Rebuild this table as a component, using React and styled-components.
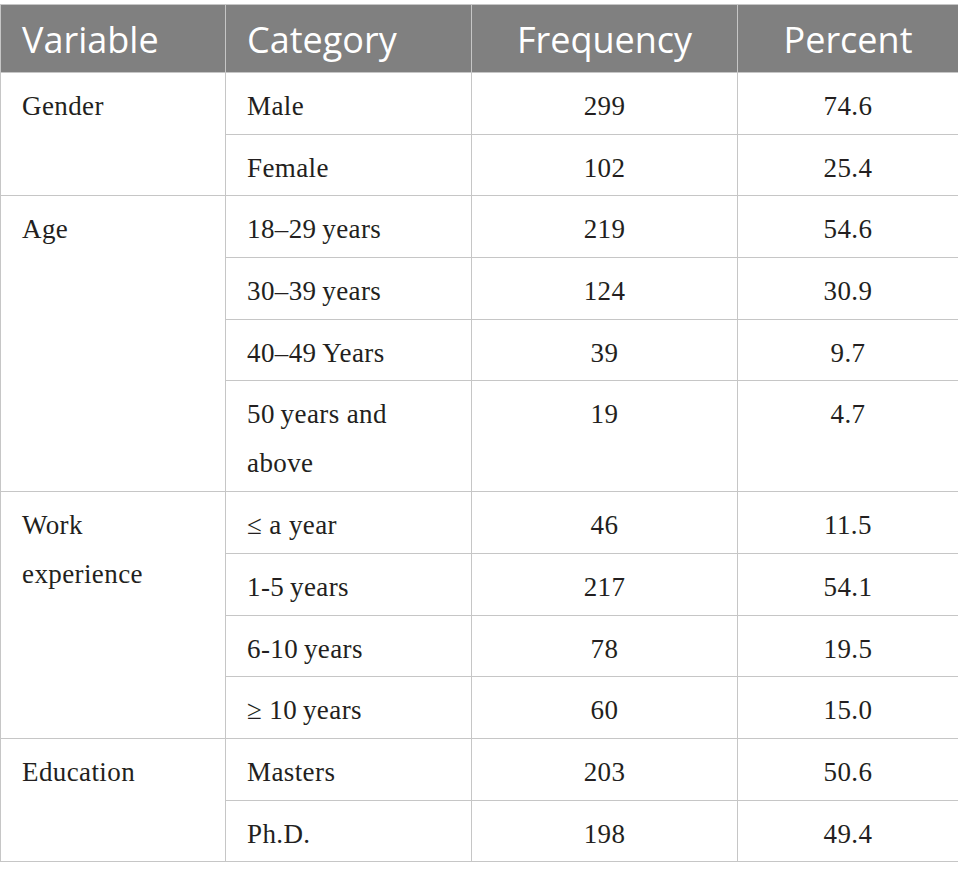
import styled, { createGlobalStyle } from 'styled-components'

const GlobalStyle = createGlobalStyle`
  body {
    margin: 0;
    background: #ffffff;
  }
`

const rows = [
  { variable: 'Gender', items: [['Male', 299, '74.6'], ['Female', 102, '25.4']] },
  {
    variable: 'Age',
    items: [
      ['18–29\u2009years', 219, '54.6'],
      ['30–39\u2009years', 124, '30.9'],
      ['40–49\u2009Years', 39, '9.7'],
      [<>50&#8201;years and<br />above</>, 19, '4.7'],
    ],
  },
  {
    variable: <>Work<br />experience</>,
    items: [
      ['≤ a year', 46, '11.5'],
      ['1-5\u2009years', 217, '54.1'],
      ['6-10\u2009years', 78, '19.5'],
      ['≥ 10\u2009years', 60, '15.0'],
    ],
  },
  { variable: 'Education', items: [['Masters', 203, '50.6'], ['Ph.D.', 198, '49.4']] },
]

const Page = styled.div`
  padding-top: 4px;
`

const Table = styled.table`
  width: 958px;
  table-layout: fixed;
  border-collapse: collapse;
  border: 1px solid #c6c6c6;
`

const Head = styled.th`
  background: #808080;
  color: #ffffff;
  font-family: 'Open Sans', 'Liberation Sans', sans-serif;
  font-weight: 400;
  font-size: 36px;
  line-height: 49px;
  padding: 10px 21px 8px;
  border: 1px solid #c6c6c6;
  text-align: ${(p) => (p.$center ? 'center' : 'left')};
  white-space: nowrap;
`

const Cell = styled.td`
  font-family: 'Liberation Serif', 'Times New Roman', serif;
  font-size: 27px;
  letter-spacing: 0.4px;
  line-height: 49px;
  color: #231f20;
  padding: 9px 21px 2.7px;
  border: 1px solid #c6c6c6;
  vertical-align: top;
  text-align: ${(p) => (p.$center ? 'center' : 'left')};
`

export default function App() {
  return (
    <Page>
      <GlobalStyle />
      <Table>
        <colgroup>
          <col style={{ width: 225 }} />
          <col style={{ width: 246 }} />
          <col style={{ width: 266 }} />
          <col style={{ width: 221 }} />
        </colgroup>
        <thead>
          <tr>
            <Head>Variable</Head>
            <Head>Category</Head>
            <Head $center>Frequency</Head>
            <Head $center>Percent</Head>
          </tr>
        </thead>
        <tbody>
          {rows.map((group, gi) =>
            group.items.map(([cat, freq, pct], i) => (
              <tr key={`${gi}-${i}`}>
                {i === 0 && <Cell rowSpan={group.items.length}>{group.variable}</Cell>}
                <Cell>{cat}</Cell>
                <Cell $center>{freq}</Cell>
                <Cell $center>{pct}</Cell>
              </tr>
            ))
          )}
        </tbody>
      </Table>
    </Page>
  )
}
